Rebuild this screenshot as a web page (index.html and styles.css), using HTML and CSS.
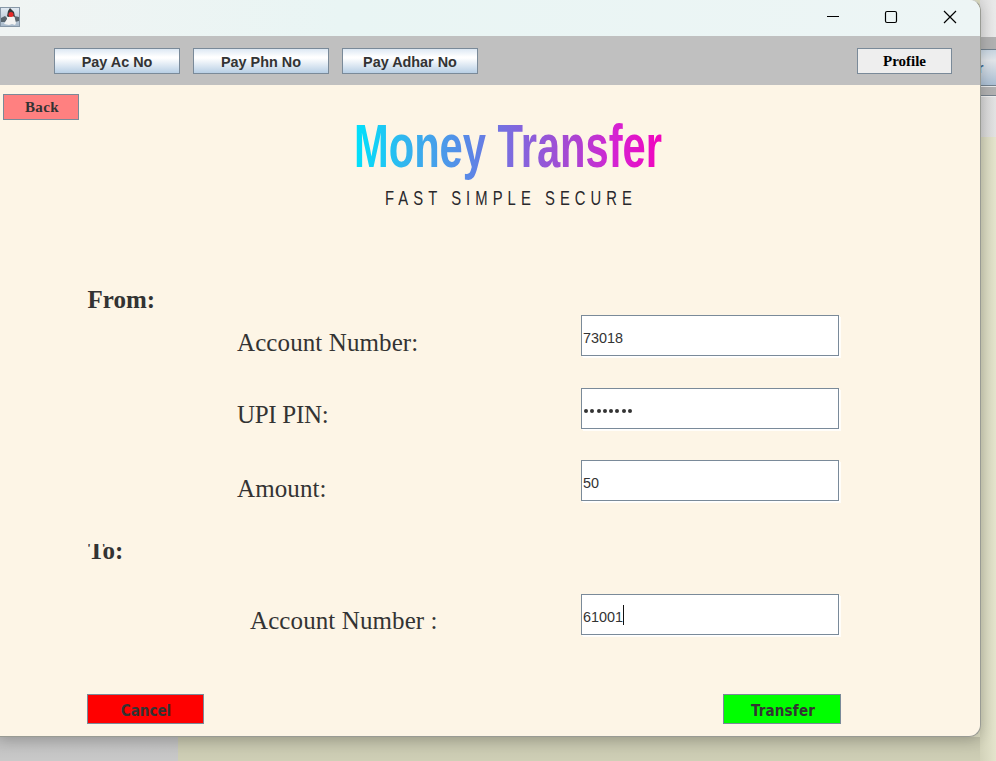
FILE: index.html
```html
<!DOCTYPE html>
<html lang="en">
<head>
<meta charset="utf-8">
<title>Money Transfer</title>
<link rel="stylesheet" href="styles.css">
</head>
<body>
<div class="desktop">
  <div class="behind-side">
    <div class="behind-title"></div>
    <div class="behind-bar"><div class="behind-button">r</div></div>
    <div class="behind-panel"></div>
  </div>
  <div class="behind-bottom"></div>
  <div class="window">
    <header class="titlebar">
      <svg class="duke" width="20" height="20" viewBox="0 0 20 20">
        <defs><linearGradient id="tile" x2="0" y2="1"><stop stop-color="#e2eaf2"/><stop offset="1" stop-color="#a8b9ca"/></linearGradient></defs>
        <rect x=".5" y=".5" width="19" height="19" fill="url(#tile)" stroke="#8797a7"/>
        <path d="M1 11l4-2 3 3-3 3H1zM14 9l5 1v4l-4 1z" fill="#59656e"/>
        <path d="M7 8l3-6 4 6 2 8-1 2-3-1-3 1-5-1 3-5z" fill="#f3f3f2"/>
        <path d="M7 9l1-5 2-3 4 4 1 5-3-1-4 1z" fill="#35383b"/>
        <circle cx="11" cy="7.5" r="2.5" fill="#e62929"/>
      </svg>
      <svg class="controls" width="140" height="20" viewBox="0 0 140 20">
        <path d="M7 8.5h12" stroke="#000" fill="none"/>
        <rect x="65.5" y="3.5" width="11" height="11" rx="1.5" fill="none" stroke="#000" stroke-width="1.2"/>
        <path d="M124 3l12 12M136 3l-12 12" stroke="#000" stroke-width="1.2" fill="none"/>
      </svg>
    </header>
    <nav class="toolbar">
      <button class="metal metal-ac">Pay Ac No</button>
      <button class="metal">Pay Phn No</button>
      <button class="metal">Pay Adhar No</button>
      <button class="profile">Profile</button>
    </nav>
    <main>
      <div class="top">
        <button class="back">Back</button>
        <svg class="logo" width="330" height="105" viewBox="0 0 330 105">
          <defs><linearGradient id="brand" gradientUnits="userSpaceOnUse" x1="10" y1="0" x2="317" y2="0">
            <stop stop-color="#00e1fb"/><stop offset=".17" stop-color="#34b4ee"/><stop offset=".38" stop-color="#5c86e6"/><stop offset=".52" stop-color="#8068de"/><stop offset=".7" stop-color="#a748d2"/><stop offset=".85" stop-color="#d522d2"/><stop offset="1" stop-color="#f204bd"/>
          </linearGradient></defs>
          <text class="brand" x="9" y="56.5" textLength="308" lengthAdjust="spacingAndGlyphs">Money Transfer</text>
          <g transform="translate(40 95) scale(.76 1)"><text class="tagline" x="0" y="0" textLength="325" xml:space="preserve">FAST SIMPLE SECURE</text></g>
        </svg>
      </div>
      <h2 class="from">From:</h2>
      <section class="fields">
        <label>Account Number:</label><div class="field">73018</div>
        <label class="pin-label">UPI PIN:</label><div class="field pin"><i></i><i></i><i></i><i></i><i></i><i></i><i></i><i></i></div>
        <label class="amount-label">Amount:</label><div class="field amount">50</div>
      </section>
      <h2 class="to"><span>To:</span></h2>
      <section class="fields recipient">
        <label>Account Number :</label><div class="field">61001<span class="caret"></span></div>
      </section>
      <div class="actions">
        <button class="cancel">Cancel</button>
        <button class="transfer">Transfer</button>
      </div>
    </main>
  </div>
</div>
</body>
</html>
```
FILE: styles.css
```css
* { box-sizing: border-box; }
body { margin: 0; color: #333; overflow: hidden; }
button { padding: 0; border: 1px solid #7a8a99; border-radius: 0; color: #333; font-weight: bold; }
h2 { margin: 0; font: bold 25px/28px "Liberation Serif", serif; }

.desktop { position: relative; width: 996px; height: 761px; overflow: hidden; background: #dcdcc2; }
.behind-side { position: absolute; left: 980px; top: 0; width: 16px; height: 761px; background: linear-gradient(90deg, #d2d2b9, #e4e4cc); }
.behind-title { height: 37px; background: linear-gradient(90deg, #dedede, #e9e9e9); }
.behind-bar { height: 59px; padding-top: 12px; background: #b0b0b0; border-bottom: 1px solid #75818c; }
.behind-button { height: 37px; border: solid #71808d; border-width: 1px 0; background: linear-gradient(#c5d3df, #e0e4e8 30%, #aabed2); box-shadow: 0 1px #e8e8e8; color: #34618c; font: bold 14px/37px "Liberation Sans", sans-serif; text-indent: -2px; }
.behind-panel { height: 41px; border-top: 1px solid #eee; background: linear-gradient(90deg, #d2d2d2, #e2e2e2); }
.behind-bottom { position: absolute; left: 0; top: 737px; width: 980px; height: 24px; background: linear-gradient(#0001, #0000), linear-gradient(90deg, #c9c9c9 178px, #cfcfb6 178px); }

.window { position: absolute; left: -1px; top: -1px; width: 982px; height: 738px; overflow: hidden; border: 1px solid #999b94; border-radius: 0 12px 12px 0; background: #fdf5e6; box-shadow: 0 3px 14px #0003; border-top-color: #c8cccb; }
.titlebar { display: flex; justify-content: space-between; height: 36px; padding: 7px 20px 0 0; background: linear-gradient(90deg, #f0f4f3, #e9f5f4 35%, #edf5f5); }
.controls { margin-top: 1px; }
.toolbar { display: flex; gap: 13px; height: 49px; padding: 12px 28px 0 54px; background: #c0c0c0; }
.toolbar button { height: 26px; }
.metal { width: 136px; background: linear-gradient(#dde8f3, #fff 33%, #fff 38%, #b8cfe5); font: bold 14.4px/26px "Liberation Sans", Arial, sans-serif; }
.metal-ac { width: 126px; }
.toolbar .profile { width: 95px; margin-left: auto; background: #eee; color: #000; font: bold 15px/24px "Liberation Serif", serif; }

.top { display: flex; align-items: flex-start; height: 201px; padding: 9px 0 0 3px; }
.back { width: 76px; height: 26px; padding-left: 2px; background: #ff8080; font: bold 15px/24px "Liberation Serif", serif; letter-spacing: .4px; }
.logo { margin: 16px 0 0 266px; }
.brand { fill: url(#brand); font: bold 61px "Liberation Sans", Arial, sans-serif; }
.tagline { fill: #29282c; font: 19.5px "Liberation Sans", Arial, sans-serif; }
.from { height: 29px; padding-left: 87.5px; }
.fields { display: grid; grid-template-columns: 344px 258px; grid-auto-rows: 41px; row-gap: 32px; padding-left: 237px; }
.fields label { padding-top: 14px; font: 25px/28px "Liberation Serif", serif; letter-spacing: .1px; }
.field { display: flex; align-items: center; padding: 4px 0 0 1px; border: 1px solid #7a8a99; background: #fff; box-shadow: 1px 1px #fff, 2px 2px #fffdf9; font: 14.4px "Liberation Sans", Arial, sans-serif; }
.fields .pin-label { padding-top: 13px; letter-spacing: -.3px; }
.amount { margin: -1px 0 1px; }
.pin { gap: 2.3px; padding: 4px 0 0 2px; }
.pin i { width: 4px; height: 4px; border-radius: 50%; background: #333; }
.caret { width: 1px; height: 20px; margin-top: -4px; background: #111; }
.to { height: 50px; margin-top: 42px; padding-left: 88px; }
.to span { display: flex; align-items: flex-end; height: 21px; line-height: 28px; overflow: hidden; }
.recipient label { padding: 13px 0 0 13px; }
.actions { display: flex; justify-content: space-between; padding: 59px 139px 0 87px; }
.actions button { height: 30px; padding-top: 3px; font: bold 15px/24px "DejaVu Sans Condensed", "DejaVu Sans", sans-serif; font-stretch: condensed; }
.actions .cancel { width: 117px; padding-left: 1px; background: #f00; }
.actions .transfer { width: 118px; padding-left: 2px; background: #0f0; letter-spacing: .2px; }
```
